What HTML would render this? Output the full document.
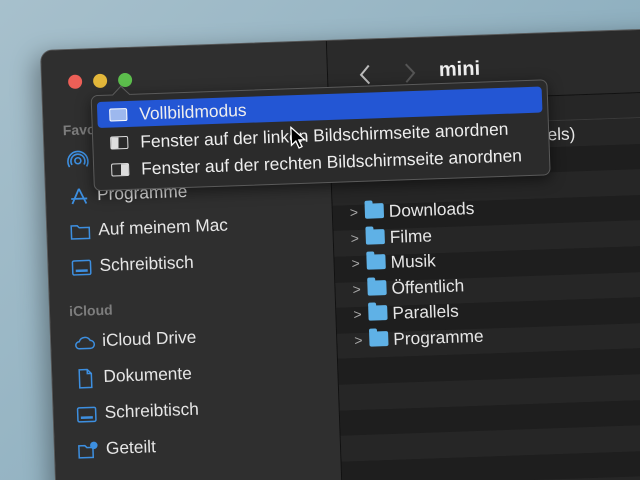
<!DOCTYPE html>
<html><head><meta charset="utf-8"><style>
html,body{margin:0;padding:0;width:640px;height:480px;overflow:hidden}
body{background:linear-gradient(135deg,#a7c0cc 0%,#8fb0c0 60%,#86a9ba 100%);font-family:"Liberation Sans",sans-serif;position:relative}
#win{position:absolute;left:40px;top:50px;width:720px;height:520px;transform:rotate(-2deg);transform-origin:0 0;background:#1f1f1f;border-radius:12px 0 0 0;overflow:hidden;box-shadow:-6px 6px 24px rgba(0,0,0,.35);border:1px solid #555}
#side{position:absolute;left:0;top:0;width:285px;height:100%;background:#2f2f2f;border-right:1px solid #111}
.tl{position:absolute;top:25px;width:14px;height:14px;border-radius:50%}
.lab{position:absolute;left:19px;color:#7d7d7d;font-size:14px;font-weight:bold}
.it{position:absolute;left:22px;color:#e6e6e6;font-size:17.3px;height:22px;line-height:22px;white-space:nowrap}
.it svg{position:absolute;left:0;top:2px}
.it span{position:absolute;left:29px}
#hdr{position:absolute;left:286px;top:0;right:0;height:62px;background:#2a2a2a;border-bottom:1px solid #111}
#colh{position:absolute;left:286px;top:63px;right:0;height:24px;background:#262626;border-bottom:1px solid #3a3a3a}
.row{position:absolute;left:286px;right:0;height:25.6px}
.row.a{background:#262626}
.row.b{background:#1e1e1e}
.fi{position:absolute;left:303px;height:22px;line-height:22px;color:#e6e6e6;font-size:17.3px;white-space:nowrap}
.fi .ch{position:absolute;left:0;top:0;color:#aaa;font-size:14px}
.fi .fd{position:absolute;left:15px;top:3px;width:19px;height:15px;background:#5fb1e6;border-radius:2px}
.fi .fd:before{content:"";position:absolute;left:0;top:-3px;width:8px;height:4px;background:#5fb1e6;border-radius:2px 2px 0 0}
.fi .t{position:absolute;left:39px}
#menu{position:absolute;left:48px;top:46px;width:455px;height:94px;background:#2b2b2b;border:1px solid #5a5a5a;border-radius:7px;box-shadow:0 4px 14px rgba(0,0,0,.5)}
#menu:before{content:"";position:absolute;left:23px;top:-7px;width:12px;height:12px;background:#2b2b2b;border-left:1px solid #5a5a5a;border-top:1px solid #5a5a5a;transform:rotate(45deg)}
.mi{position:absolute;left:5px;right:5px;height:26px;line-height:26px;color:#eee;font-size:17.4px;border-radius:4px}
.mi .ic{position:absolute;left:12px;top:7px;width:16px;height:11px;border:1.5px solid #ddd;border-radius:2px}
.mi span{position:absolute;left:42px}
</style></head><body>
<div id="win">
 <div id="side">
  <div class="tl" style="left:26px;background:#ec5f57"></div>
  <div class="tl" style="left:51px;background:#e3b73a"></div>
  <div class="tl" style="left:76px;background:#5cbd4c"></div>
  <div class="lab" style="top:72px">Favoriten</div>
  <div class="it" style="top:98px"><svg width="22" height="22" viewBox="0 0 22 22" fill="none" stroke="#3d8fe0" stroke-width="1.6"><circle cx="11" cy="11" r="3"/><path d="M5 15a7 7 0 1 1 12 0M2.5 17a10 10 0 1 1 17 0"/></svg><span>AirDrop</span></div>
  <div class="it" style="top:134px"><svg width="22" height="22" viewBox="0 0 22 22" fill="none" stroke="#3d8fe0" stroke-width="1.8"><path d="M11 3L4 18M11 3l7 15M3 13h16"/></svg><span>Programme</span></div>
  <div class="it" style="top:169px"><svg width="22" height="22" viewBox="0 0 22 22" fill="none" stroke="#3d8fe0" stroke-width="1.5"><path d="M2 5h6l2 2h10v11H2z"/></svg><span>Auf meinem Mac</span></div>
  <div class="it" style="top:205px"><svg width="22" height="22" viewBox="0 0 22 22" fill="none" stroke="#3d8fe0" stroke-width="1.5"><rect x="2" y="4" width="18" height="14" rx="1.5"/><path d="M5 14h12" stroke-width="2.5"/></svg><span>Schreibtisch</span></div>
  <div class="lab" style="top:253px">iCloud</div>
  <div class="it" style="top:280px"><svg width="22" height="22" viewBox="0 0 22 22" fill="none" stroke="#3d8fe0" stroke-width="1.5"><path d="M6 17h11a4 4 0 0 0 0-8 6 6 0 0 0-11 1 3.5 3.5 0 0 0 0 7z"/></svg><span>iCloud Drive</span></div>
  <div class="it" style="top:316px"><svg width="22" height="22" viewBox="0 0 22 22" fill="none" stroke="#3d8fe0" stroke-width="1.5"><path d="M5 2h8l4 4v14H5zM13 2v4h4"/></svg><span>Dokumente</span></div>
  <div class="it" style="top:352px"><svg width="22" height="22" viewBox="0 0 22 22" fill="none" stroke="#3d8fe0" stroke-width="1.5"><rect x="2" y="4" width="18" height="14" rx="1.5"/><path d="M5 14h12" stroke-width="2.5"/></svg><span>Schreibtisch</span></div>
  <div class="it" style="top:388px"><svg width="22" height="22" viewBox="0 0 22 22" fill="none" stroke="#3d8fe0" stroke-width="1.5"><path d="M2 6h6l2 2h6v10H2z"/><circle cx="17" cy="6" r="3" fill="#3d8fe0"/></svg><span>Geteilt</span></div>
 </div>
 <div id="hdr">
  <svg style="position:absolute;left:30px;top:24px" width="14" height="22" viewBox="0 0 14 22" fill="none" stroke="#bbb" stroke-width="2"><path d="M11 2L3 11l8 9"/></svg>
  <svg style="position:absolute;left:75px;top:24px" width="14" height="22" viewBox="0 0 14 22" fill="none" stroke="#555" stroke-width="2"><path d="M3 2l8 9-8 9"/></svg>
  <div style="position:absolute;left:111px;top:22px;color:#eee;font-weight:bold;font-size:20px">mini</div>
 </div>
 <div id="colh"></div>
 <div class="row a" style="top:88px"></div>
 <div class="row b" style="top:113.6px"></div>
 <div class="row a" style="top:139.2px"></div>
 <div class="row b" style="top:164.8px"></div>
 <div class="row a" style="top:190.4px"></div>
 <div class="row b" style="top:216px"></div>
 <div class="row a" style="top:241.6px"></div>
 <div class="row b" style="top:267.2px"></div>
 <div class="row a" style="top:292.8px"></div>
 <div class="row b" style="top:318.4px"></div>
 <div class="row a" style="top:344px"></div>
 <div class="row b" style="top:369.6px"></div>
 <div class="row a" style="top:395.2px"></div>
 <div class="row b" style="top:420.8px"></div>
 <div class="row a" style="top:446.4px"></div>
 <div class="row b" style="top:472px"></div>
 <div class="fi" style="top:90px;left:340px"><span class="t" style="left:0">Macintosh HD (Parallels)</span></div>
 <div class="fi" style="top:161px"><span class="ch">&gt;</span><span class="fd"></span><span class="t">Downloads</span></div>
 <div class="fi" style="top:186.6px"><span class="ch">&gt;</span><span class="fd"></span><span class="t">Filme</span></div>
 <div class="fi" style="top:212.2px"><span class="ch">&gt;</span><span class="fd"></span><span class="t">Musik</span></div>
 <div class="fi" style="top:237.8px"><span class="ch">&gt;</span><span class="fd"></span><span class="t">Öffentlich</span></div>
 <div class="fi" style="top:263.4px"><span class="ch">&gt;</span><span class="fd"></span><span class="t">Parallels</span></div>
 <div class="fi" style="top:289px"><span class="ch">&gt;</span><span class="fd"></span><span class="t">Programme</span></div>
 <div id="menu">
  <div class="mi" style="top:6px;background:#2356d4"><div class="ic" style="background:#9db8ee;border-color:#fff"></div><span>Vollbildmodus</span></div>
  <div class="mi" style="top:34px"><div class="ic" style="background:linear-gradient(90deg,#ddd 45%,transparent 45%)"></div><span>Fenster auf der linken Bildschirmseite anordnen</span></div>
  <div class="mi" style="top:61px"><div class="ic" style="background:linear-gradient(90deg,transparent 55%,#ddd 55%)"></div><span>Fenster auf der rechten Bildschirmseite anordnen</span></div>
 </div>
 <svg style="position:absolute;left:246px;top:84px" width="16" height="24" viewBox="0 0 16 24"><path d="M1 1v18l4.5-4 3 7 3-1.3-3-6.7h6z" fill="#000" stroke="#fff" stroke-width="1.3"/></svg>
</div>
</body></html>
